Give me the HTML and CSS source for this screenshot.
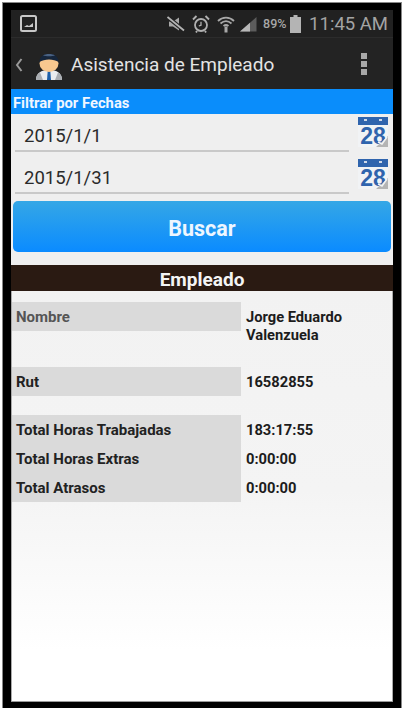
FILE: index.html
```html
<!DOCTYPE html>
<html lang="en">
<head>
    <meta charset="UTF-8">
    <meta name="viewport" content="width=device-width, initial-scale=1.0">
    <title>Asistencia de Empleado</title>
    <link rel="stylesheet" href="styles.css">
</head>
<body>

    <div class="phone">
        <div class="screen">

            <div class="status-bar">
                <svg class="status-pic" width="17" height="17" viewBox="0 0 17 17">
                    <rect x="1" y="1" width="15" height="15" rx="1.500" fill="none" stroke="#c8c8c8" stroke-width="2"/>
                    <path d="M4 12 L7 10 L9 11 L13 8 V12 Z" fill="#c8c8c8"/>
                </svg>
                <div class="status-right">
                    <svg width="18" height="16" viewBox="0 0 18 16">
                        <path d="M2 5.500 H6 L12 1.500 V14.500 L6 10.500 H2 Z" fill="#a8a8a8"/>
                        <path d="M0.500 1 L17 14.500" stroke="#212121" stroke-width="4"/>
                        <path d="M0.500 1 L17 14.500" stroke="#b4b4b4" stroke-width="1.800"/>
                    </svg>
                    <svg width="18" height="18" viewBox="0 0 18 18">
                        <circle cx="9" cy="10" r="6" fill="none" stroke="#b0b0b0" stroke-width="1.800"/>
                        <path d="M9 6.800 V10.200 L6.800 11" fill="none" stroke="#b0b0b0" stroke-width="1.300"/>
                        <path d="M1 4.500 L4.500 1 M17 4.500 L13.500 1 M5 16 L4 17.500 M13 16 L14 17.500" stroke="#b0b0b0" stroke-width="1.900"/>
                    </svg>
                    <svg width="18" height="18" viewBox="0 0 18 18">
                        <path d="M1 6 C5.500 1.500 12.500 1.500 17 6" fill="none" stroke="#a8a8a8" stroke-width="1.800"/>
                        <path d="M3.500 8.500 C7 5.500 11 5.500 14.500 8.500" fill="none" stroke="#a8a8a8" stroke-width="1.800"/>
                        <path d="M6.500 11 C8 9.800 10 9.800 11.500 11" fill="none" stroke="#a8a8a8" stroke-width="1.800"/>
                        <rect x="7.500" y="11.500" width="3" height="6" fill="#a8a8a8"/>
                    </svg>
                    <svg class="signal" width="17" height="16" viewBox="0 0 17 16">
                        <path d="M0 15.500 L16.500 1 V15.500 Z" fill="#5c5c5c"/>
                        <path d="M0 15.500 L10 6.700 V15.500 Z" fill="#b8b8b8"/>
                    </svg>
                    <span class="battery-text">89%</span>
                    <svg class="battery" width="11" height="18" viewBox="0 0 11 18">
                        <path d="M3.500 0 H7.500 V2 H11 V18 H0 V2 H3.500 Z" fill="#b4b4b4"/>
                    </svg>
                    <span class="clock">11:45 AM</span>
                </div>
            </div>

            <div class="action-bar">
                <svg class="back" width="8" height="14" viewBox="0 0 8 14">
                    <path d="M6.500 1 L2 7 L6.500 13" fill="none" stroke="#9a9a9a" stroke-width="2"/>
                </svg>
                <svg class="avatar" width="30" height="30" viewBox="0 0 30 30">
                    <path d="M2 30 C2 23 7 20 15 20 C23 20 28 23 28 30 Z" fill="#e9ecef"/>
                    <path d="M2 30 C2 26 3.500 24 6 22.500 L9 30 Z M28 30 C28 26 26.500 24 24 22.500 L21 30 Z" fill="#a9adb2"/>
                    <path d="M13.800 20 H16.200 L17 30 H13 Z" fill="#1d5fa8"/>
                    <ellipse cx="15" cy="13.500" rx="9.500" ry="8.500" fill="#f8c88f"/>
                    <path d="M5.500 12 C5 1 25 1 24.500 12 C20 8.500 10 8.500 5.500 12 Z" fill="#16263c"/>
                    <path d="M9 5.500 C12 3.500 18 3.500 21 5.500 C18 6.500 12 6.500 9 5.500 Z" fill="#4a6283"/>
                </svg>
                <span class="app-title">Asistencia de Empleado</span>
                <div class="overflow">
                    <i></i><i></i><i></i>
                </div>
            </div>

            <div class="filter-title">Filtrar por Fechas</div>

            <div class="filter-body">
                <div class="date-row">
                    <div class="date-input">2015/1/1</div>
                    <svg class="calendar" width="32" height="32" viewBox="0 0 32 32">
                        <rect x="1" y="1" width="30" height="30" fill="#f1f3f5"/>
                        <rect x="1" y="1" width="30" height="8" fill="#2f64ad"/>
                        <rect x="7" y="3" width="3" height="2" fill="#cfd9e8"/>
                        <rect x="22" y="3" width="3" height="2" fill="#cfd9e8"/>
                        <text x="16" y="28" class="calendar-num">28</text>
                        <path d="M19 31 L31 20 V31 Z" fill="#b4b4b4"/>
                        <path d="M21 26 L25 28 L30 21" fill="none" stroke="#f1f3f5" stroke-width="1.500"/>
                    </svg>
                </div>
                <div class="date-row">
                    <div class="date-input">2015/1/31</div>
                    <svg class="calendar" width="32" height="32" viewBox="0 0 32 32">
                        <rect x="1" y="1" width="30" height="30" fill="#f1f3f5"/>
                        <rect x="1" y="1" width="30" height="8" fill="#2f64ad"/>
                        <rect x="7" y="3" width="3" height="2" fill="#cfd9e8"/>
                        <rect x="22" y="3" width="3" height="2" fill="#cfd9e8"/>
                        <text x="16" y="28" class="calendar-num">28</text>
                        <path d="M19 31 L31 20 V31 Z" fill="#b4b4b4"/>
                        <path d="M21 26 L25 28 L30 21" fill="none" stroke="#f1f3f5" stroke-width="1.500"/>
                    </svg>
                </div>
                <button class="search-btn">Buscar</button>
            </div>

            <div class="section-title">Empleado</div>

            <div class="details">
                <div class="info-row row-name">
                    <div class="label label-soft">Nombre</div>
                    <div class="value">Jorge Eduardo Valenzuela</div>
                </div>
                <div class="info-row row-rut">
                    <div class="label">Rut</div>
                    <div class="value">16582855</div>
                </div>
                <div class="info-row">
                    <div class="label">Total Horas Trabajadas</div>
                    <div class="value">183:17:55</div>
                </div>
                <div class="info-row">
                    <div class="label">Total Horas Extras</div>
                    <div class="value">0:00:00</div>
                </div>
                <div class="info-row">
                    <div class="label">Total Atrasos</div>
                    <div class="value">0:00:00</div>
                </div>
            </div>

        </div>
    </div>

</body>
</html>
```

FILE: styles.css
```css
html, body {
    margin: 0;
    height: 100%;
    background: #fff;
}

body {
    font-family: Roboto, 'Liberation Sans', sans-serif;
    overflow: hidden;
}

.phone {
    box-sizing: border-box;
    width: 398px;
    height: 705px;
    margin: 3px 0 0 3px;
    padding: 7px 8px 6px 8px;
    background: #000;
    box-shadow: 0 0 0 1px #888;
}

.screen {
    height: 692px;
    display: flex;
    flex-direction: column;
    background: #fff;
    border-bottom: 1px solid #999;
    box-sizing: border-box;
}

/* top bars */
.status-bar {
    height: 27px;
    padding: 0 5px 0 9px;
    display: flex;
    align-items: center;
    justify-content: space-between;
    background: #212121;
    border-bottom: 1px solid #2c2c2c;
}

.status-right {
    display: flex;
    align-items: center;
    gap: 7px;
}

.signal {
    margin-left: -2px;
}

.battery-text {
    width: 23px;
    font-size: 12.500px;
    font-weight: 500;
    color: #a8a8a8;
    margin-left: -1px;
}

.battery {
    margin-left: -3px;
}

.clock {
    font-size: 18.500px;
    color: #a4a4a4;
    margin-left: 1px;
}

.action-bar {
    height: 51px;
    display: flex;
    align-items: center;
    background: #232323;
}

.back {
    margin: 2px 0 0 4px;
}

.avatar {
    margin: 2px 0 0 11px;
}

.app-title {
    margin: 2px 0 0 7px;
    font-size: 19px;
    color: #e4e4e4;
}

.overflow {
    margin-left: auto;
    margin-right: 26px;
    display: flex;
    flex-direction: column;
    gap: 2px;
}

.overflow i {
    display: block;
    width: 6px;
    height: 6px;
    background: #a8a8a8;
}

/* date filter */
.filter-title {
    height: 25px;
    padding-left: 2px;
    line-height: 29px;
    font-size: 14.800px;
    font-weight: 700;
    color: #f0f6ff;
    background: #0a8dfb;
}

.filter-body {
    height: 151px;
    padding: 0 2px;
    background: #efefef;
}

.date-row {
    height: 42px;
    display: flex;
    align-items: flex-start;
}

.date-input {
    box-sizing: border-box;
    width: 334px;
    height: 38px;
    margin-left: 2px;
    padding: 12px 0 0 9px;
    font-size: 18.500px;
    line-height: 21px;
    color: #2a2a2a;
    border-bottom: 2px solid #c9c9c9;
}

.calendar {
    margin: 2px 0 0 8px;
}

.calendar-num {
    font-family: 'Liberation Sans Narrow', 'Liberation Sans', sans-serif;
    font-size: 23px;
    font-weight: 700;
    fill: #2f64ad;
    text-anchor: middle;
}

.search-btn {
    display: block;
    width: 378px;
    height: 51px;
    margin-top: 3px;
    padding-top: 5px;
    border: none;
    border-radius: 5px;
    font-family: inherit;
    font-size: 21.500px;
    font-weight: 700;
    color: #eef6ff;
    background: linear-gradient(#35a7e6, #0a8bff);
}

/* employee data */
.section-title {
    height: 26px;
    line-height: 30px;
    text-align: center;
    font-size: 19px;
    font-weight: 700;
    color: #f4f4f4;
    background: #2a1a12;
}

.details {
    flex: 1;
    padding-top: 11px;
    background: linear-gradient(#f2f2f2, #f4f4f4 200px, #fff 360px);
    box-shadow: inset 1px 0 #aaa, inset -1px 0 #aaa;
}

.info-row {
    display: grid;
    grid-template-columns: 229px 1fr;
    column-gap: 5px;
    padding-left: 1px;
    font-size: 14.700px;
    font-weight: 700;
    line-height: 18px;
}

.label {
    box-sizing: border-box;
    height: 29px;
    padding: 1px 0 0 4px;
    line-height: 29px;
    font-size: 15px;
    color: #222;
    background: #dadada;
}

.label-soft {
    color: #555;
}

.value {
    padding-top: 6px;
    padding-right: 30px;
    color: #1c1c1c;
}

.row-name {
    height: 65px;
}

.row-rut {
    height: 48px;
}
```
